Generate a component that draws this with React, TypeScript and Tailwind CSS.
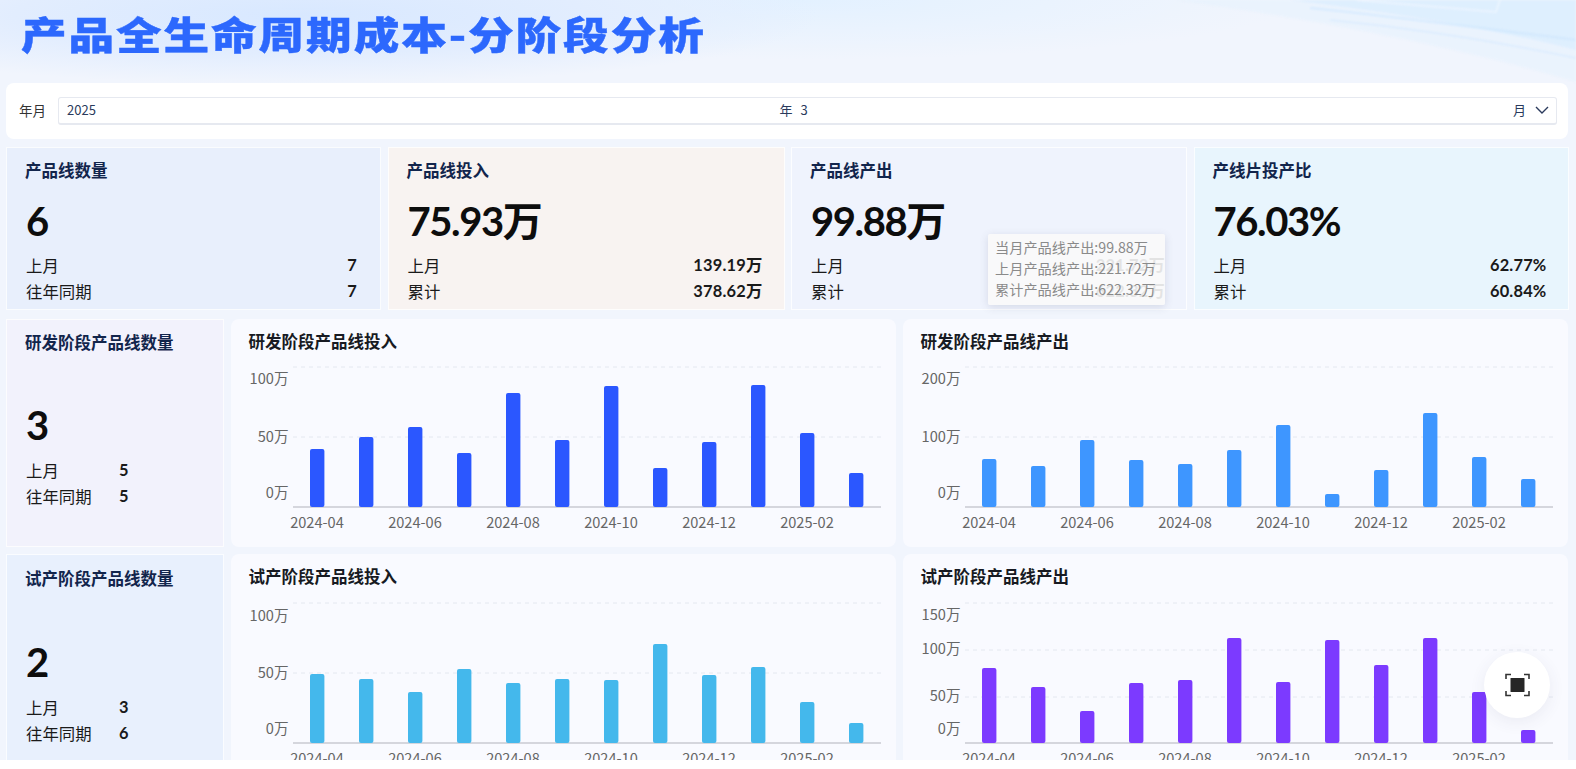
const cjk = "font-['Noto_Sans_CJK_SC','Microsoft_YaHei',sans-serif]";
const num = "font-['Lato','Noto_Sans_CJK_SC',sans-serif]";

const months = ["2024-04", "", "2024-06", "", "2024-08", "", "2024-10", "", "2024-12", "", "2025-02", ""];

type Tick = { label: string; y: number };

function BarChart({ heights, color, ticks, grids, titleCls, svgCls, title, base }: {
  heights: number[];
  color: string;
  ticks: Tick[];
  grids: number[];
  title: string;
  titleCls: string;
  svgCls: string;
  base: number;
}) {
  return (
    <div className="bg-[#f9faff] rounded-lg overflow-hidden">
      <div className={`flex items-center pl-[17.5px] text-[16.5px] font-bold text-[#171a22] ${titleCls}`}>{title}</div>
      <svg width="665" height="190" className={`block ${svgCls}`}>
        {grids.map((g) => (
          <line key={g} x1="62" x2="650" y1={g} y2={g} stroke="#e4e8f0" strokeDasharray="4 4" />
        ))}
        <line x1="62" x2="650" y1={base} y2={base} stroke="#c8cad2" strokeWidth="1.5" />
        {heights.map((h, i) => (
          <rect key={i} x={79 + i * 49} y={base - h} width="14.4" height={h} rx="2" fill={color} />
        ))}
        {ticks.map((t) => (
          <text key={t.label} x="57.5" y={t.y + 5} textAnchor="end" fontSize="14.6" fill="#666">{t.label}</text>
        ))}
        {months.map((m, i) => m && (
          <text key={m} x={86 + i * 49} y={base + 21} textAnchor="middle" fontSize="14.6" fill="#666">{m}</text>
        ))}
      </svg>
    </div>
  );
}

function Kpi({ title, value, rows, bg, pr, children }: {
  title: string;
  value: string;
  rows: [string, string][];
  bg: string;
  pr: string;
  children?: React.ReactNode;
}) {
  return (
    <div className={`relative border border-white/80 pl-[18px] ${pr} ${bg}`}>
      <div className="mt-[8px] h-[28px] leading-[28px] text-[16.5px] font-bold text-[#12254c]">{title}</div>
      <div className={`ml-[1px] mt-[9px] h-[56px] leading-[56px] text-[40px] font-bold tracking-[-1.4px] text-[#0d0d0d] ${num}`}>{value}</div>
      {rows.map(([k, v], i) => (
        <div key={k} className={`ml-[1px] flex justify-between h-[26px] leading-[26px] text-[16.4px] text-[#1a1a1a] ${i === 0 ? "mt-[3px]" : ""}`}>
          <span>{k}</span>
          <span className={`font-bold tracking-[0.2px] ${num}`}>{v}</span>
        </div>
      ))}
      {children}
    </div>
  );
}

function StageCard({ title, value, rows, bg, titleCls, numCls }: {
  title: string;
  value: string;
  rows: [string, string][];
  bg: string;
  titleCls: string;
  numCls: string;
}) {
  return (
    <div className={`border border-white/80 pl-[18px] ${bg}`}>
      <div className={`flex items-center text-[16.5px] font-bold text-[#12254c] ${titleCls}`}>{title}</div>
      <div className={`ml-[1px] h-[56px] leading-[56px] text-[40px] font-bold text-[#0d0d0d] ${num} ${numCls}`}>{value}</div>
      <div className="ml-[1px] mt-[4px]">
        {rows.map(([k, v]) => (
          <div key={k} className="flex h-[26px] leading-[26px] text-[16.4px] text-[#1a1a1a]">
            <span className="w-[93px]">{k}</span>
            <span className={`font-bold ${num}`}>{v}</span>
          </div>
        ))}
      </div>
    </div>
  );
}

export default function App() {
  return (
    <div className={`relative h-[760px] w-[1576px] overflow-hidden bg-[#f1f5fd] ${cjk}`}>
      {/* header backdrop */}
      <div className="absolute left-0 top-0 h-[110px] w-full bg-[radial-gradient(ellipse_520px_70px_at_300px_15px,#d8e8ff_0%,#e2edfe_55%,transparent_100%),radial-gradient(ellipse_500px_60px_at_800px_0px,#e3f1ff_0%,transparent_100%)]" />
      <svg className="absolute left-0 top-0 blur-[1px]" width="1576" height="83">
        <path d="M1176 0 C1320 20 1470 50 1576 82 L1576 0 Z" fill="#e6f2fe" opacity="0.6" />
        <path d="M1290 0 C1390 12 1490 28 1576 50 L1576 0 Z" fill="#d6ebfe" opacity="0.6" />
        <path d="M1310 8 C1390 16 1480 28 1576 40" fill="none" stroke="#c8e4fd" strokeWidth="2" opacity="0.6" />
        <path d="M1330 20 C1410 28 1490 40 1576 58" fill="none" stroke="#cfe7fd" strokeWidth="2" opacity="0.5" />
        <path d="M1356 0 L1496 12 L1500 0" fill="none" stroke="#eef6ff" strokeWidth="1.5" />
      </svg>

      <div className="relative pl-[6px] w-[1568px]">
        <div className="h-[83px] pl-[15px] pt-[8px]">
          <h1 className="origin-left scale-x-[1.2] whitespace-nowrap text-[38px] leading-[50px] font-black tracking-[1.6px] text-[#2c68fd] [-webkit-text-stroke:0.4px_#2c68fd]">
            产品全生命周期成本-分阶段分析
          </h1>
        </div>

        {/* filter */}
        <div className="flex h-[56px] items-center rounded-lg bg-white pl-[13px] pr-[11px]">
          <span className="w-[39px] pb-[2px] text-[13.5px] text-[#333]">年月</span>
          <div className="flex h-[28px] flex-1 items-center rounded-[3px] border border-[#e6e9f0] border-b-2 pb-[2px] pl-[8px] pr-[7px] text-[13px] text-[#2a3a5c]">
            <div className="flex flex-1 justify-between pr-[8px]">
              <span>2025</span>
              <span>年</span>
            </div>
            <div className="flex flex-1 justify-between">
              <span>3</span>
              <span>月</span>
            </div>
            <svg className="ml-[9px]" width="14" height="8" viewBox="0 0 14 8" fill="none" stroke="#2a3a5c" strokeWidth="1.4">
              <path d="M1 1 L7 7 L13 1" />
            </svg>
          </div>
        </div>

        {/* kpi row */}
        <div className="mt-[8px] grid h-[163px] grid-cols-[375px_397px_396px_375px] gap-x-[6.5px]">
          <Kpi title="产品线数量" value="6" bg="bg-[#e8effc]" pr="pr-[23px]" rows={[["上月", "7"], ["往年同期", "7"]]} />
          <Kpi title="产品线投入" value="75.93万" bg="bg-[#f8f3f1]" pr="pr-[21px]" rows={[["上月", "139.19万"], ["累计", "378.62万"]]} />
          <Kpi title="产品线产出" value="99.88万" bg="bg-[#eff3fd]" pr="pr-[21px]" rows={[["上月", "221.72万"], ["累计", "622.32万"]]}>
            <div className="absolute left-[196px] top-[86px] h-[71px] w-[177px] rounded-[2px] bg-[#fafafa]/90 py-[3px] pl-[7px] text-[14.2px] leading-[21px] text-[#8a8a8a] shadow-[0_2px_8px_rgba(60,70,100,0.15)]">
              <div>当月产品线产出:99.88万</div>
              <div>上月产品线产出:221.72万</div>
              <div>累计产品线产出:622.32万</div>
            </div>
          </Kpi>
          <Kpi title="产线片投产比" value="76.03%" bg="bg-[#e8f5fd]" pr="pr-[21px]" rows={[["上月", "62.77%"], ["累计", "60.84%"]]} />
        </div>

        {/* rd stage */}
        <div className="mt-[9px] grid h-[228px] grid-cols-[218px_665px_665px] gap-x-[7px]">
          <StageCard title="研发阶段产品线数量" value="3" bg="bg-[#f2f2fc]" titleCls="h-[44px]" numCls="mt-[33px]" rows={[["上月", "5"], ["往年同期", "5"]]} />
          <BarChart
            title="研发阶段产品线投入"
            titleCls="h-[44px]"
            svgCls="-mt-[3px]"
            heights={[58, 70, 80, 54, 114, 67, 121, 39, 65, 122, 74, 34]}
            color="#2b57ff"
            base={147}
            grids={[7, 77]}
            ticks={[{ label: "100万", y: 19 }, { label: "50万", y: 77 }, { label: "0万", y: 133 }]}
          />
          <BarChart
            title="研发阶段产品线产出"
            titleCls="h-[44px]"
            svgCls="-mt-[3px]"
            heights={[48, 41, 67, 47, 43, 57, 82, 13, 37, 94, 50, 28]}
            color="#3e96ff"
            base={147}
            grids={[7, 77]}
            ticks={[{ label: "200万", y: 19 }, { label: "100万", y: 77 }, { label: "0万", y: 133 }]}
          />
        </div>

        {/* trial stage */}
        <div className="mt-[7px] grid h-[228px] grid-cols-[218px_665px_665px] gap-x-[7px]">
          <StageCard title="试产阶段产品线数量" value="2" bg="bg-[#e8f0fd]" titleCls="h-[46px]" numCls="mt-[33px]" rows={[["上月", "3"], ["往年同期", "6"]]} />
          <BarChart
            title="试产阶段产品线投入"
            titleCls="h-[45px]"
            svgCls="-mt-[3px]"
            heights={[69, 64, 51, 74, 60, 64, 63, 99, 68, 76, 41, 20]}
            color="#44b8ec"
            base={147}
            grids={[7, 77]}
            ticks={[{ label: "100万", y: 20 }, { label: "50万", y: 77 }, { label: "0万", y: 133 }]}
          />
          <BarChart
            title="试产阶段产品线产出"
            titleCls="h-[45px]"
            svgCls="-mt-[3px]"
            heights={[75, 56, 32, 60, 63, 105, 61, 103, 78, 105, 51, 13]}
            color="#7c3aff"
            base={147}
            grids={[7, 54, 101]}
            ticks={[{ label: "150万", y: 19 }, { label: "100万", y: 53 }, { label: "50万", y: 100 }, { label: "0万", y: 133 }]}
          />
        </div>
      </div>

      {/* fullscreen button */}
      <button className="absolute left-[1484px] top-[652px] flex h-[66px] w-[66px] items-center justify-center rounded-full bg-white shadow-[0_4px_16px_rgba(60,70,100,0.08)]">
        <svg width="25" height="24" viewBox="0 0 25 24" fill="none" stroke="#333" strokeWidth="1.6">
          <path d="M1 6 V1.5 H6 M19 1.5 H24 V6 M24 18 V22.5 H19 M6 22.5 H1 V18" />
          <rect x="5.5" y="5" width="14" height="14" rx="0.5" fill="#262626" stroke="none" />
        </svg>
      </button>
    </div>
  );
}
